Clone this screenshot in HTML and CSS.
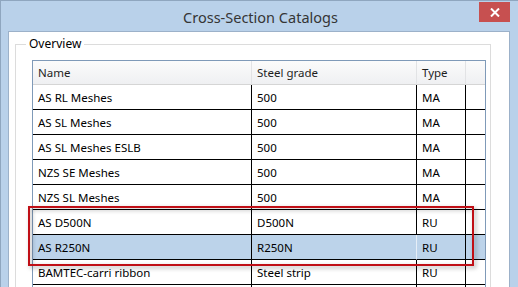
FILE: index.html
```html
<!DOCTYPE html>
<html lang="en">
<head>
  <meta charset="UTF-8" />
  <title>Cross-Section Catalogs</title>
  <link rel="stylesheet" href="styles.css">
</head>
<body>
  <div class="window">
    <div class="titlebar">
      <span class="title">Cross-Section Catalogs</span>
      <button class="close-btn" aria-label="Close">
        <svg width="10" height="9" viewBox="0 0 10 9">
          <path d="M1 0.5 L9 8.5 M9 0.5 L1 8.5" stroke="#fff" stroke-width="2" fill="none"/>
        </svg>
      </button>
    </div>

    <div class="client">
      <fieldset class="group">
        <legend>Overview</legend>
        <table class="catalog">
          <thead>
            <tr>
              <th class="col-name">Name</th>
              <th class="col-grade">Steel grade</th>
              <th class="col-type">Type</th>
              <th class="col-fill"></th>
            </tr>
          </thead>
          <tbody>
            <tr><td>AS RL Meshes</td><td>500</td><td>MA</td><td></td></tr>
            <tr><td>AS SL Meshes</td><td>500</td><td>MA</td><td></td></tr>
            <tr><td>AS SL Meshes ESLB</td><td>500</td><td>MA</td><td></td></tr>
            <tr><td>NZS SE Meshes</td><td>500</td><td>MA</td><td></td></tr>
            <tr><td>NZS SL Meshes</td><td>500</td><td>MA</td><td></td></tr>
            <tr><td>AS D500N</td><td>D500N</td><td>RU</td><td></td></tr>
            <tr class="selected"><td>AS R250N</td><td>R250N</td><td>RU</td><td></td></tr>
            <tr><td>BAMTEC-carri ribbon</td><td>Steel strip</td><td>RU</td><td></td></tr>
            <tr><td>&nbsp;</td><td></td><td></td><td></td></tr>
          </tbody>
        </table>
      </fieldset>
    </div>

    <!-- annotation drawn over the two RU rows -->
    <div class="mark"></div>
  </div>
</body>
</html>
```

FILE: styles.css
```css
* {
  margin: 0;
  padding: 0;
  box-sizing: border-box;
}

body {
  font-family: 'Noto Sans', 'Open Sans', sans-serif;
  font-size: 11.5px;
  color: #000;
  background: #b9d1ea;
  overflow: hidden;
}

.window {
  position: relative;
  width: 518px;
  height: 287px;
  display: flex;
  flex-direction: column;
  background: #b9d1ea;
  border-left: 1px solid #8fa6bf;
  border-top: 1px solid #8fa6bf;
  padding: 0 8px 0 7px;
  overflow: hidden;
}

.titlebar {
  height: 30px;
  display: flex;
  align-items: flex-start;
  justify-content: center;
  flex-shrink: 0;
}

.title {
  font-size: 14.5px;
  color: #353535;
  line-height: 20px;
  margin-top: 6px;
  margin-left: 3px;
}

.close-btn {
  position: absolute;
  top: 1px;
  right: 8px;
  width: 31px;
  height: 20px;
  background: #c75050;
  border: none;
  display: flex;
  align-items: center;
  justify-content: center;
}

.client {
  flex: 1;
  background: #fff;
  border: 1px solid #9cb1c9;
  border-bottom: none;
}

.group {
  width: 476px;
  margin: 4px 0 0 6px;
  border: 1px solid #dcdcdc;
  padding: 0;
}

.group legend {
  margin-left: 10px;
  padding: 0 3px;
  line-height: 16px;
  font-size: 12px;
}

.catalog {
  margin: 8px 0 0 16px;
  width: 454px;
  table-layout: fixed;
  border-collapse: separate;
  border-spacing: 0;
  border: 1px solid #7f9ab8;
  border-bottom: none;
}

.catalog th,
.catalog td {
  height: 25px;
  padding: 0 5px;
  text-align: left;
  font-weight: normal;
  white-space: nowrap;
  border-right: 1px solid #000;
  border-bottom: 1px solid #000;
}

.catalog th {
  height: 24px;
  background: linear-gradient(#fbfbfb, #eff0f2);
  border-right-color: #e2e3e5;
  border-bottom-color: #d5d5d5;
  color: #1e1e1e;
}

.catalog th:last-child,
.catalog td:last-child {
  border-right: none;
}

.col-name { width: 219px; }
.col-grade { width: 165px; }
.col-type { width: 49px; }
.col-fill { width: 19px; }

.catalog .selected td {
  background: #bcd3ea;
}

.catalog .selected td:nth-child(2) {
  border-right-color: #e6eef7;
}

.mark {
  position: absolute;
  left: 27px;
  top: 205px;
  width: 446px;
  height: 60px;
  border: 2px solid #c00f16;
  filter: drop-shadow(2px 2px 2px rgba(0, 0, 0, 0.35));
}
```
